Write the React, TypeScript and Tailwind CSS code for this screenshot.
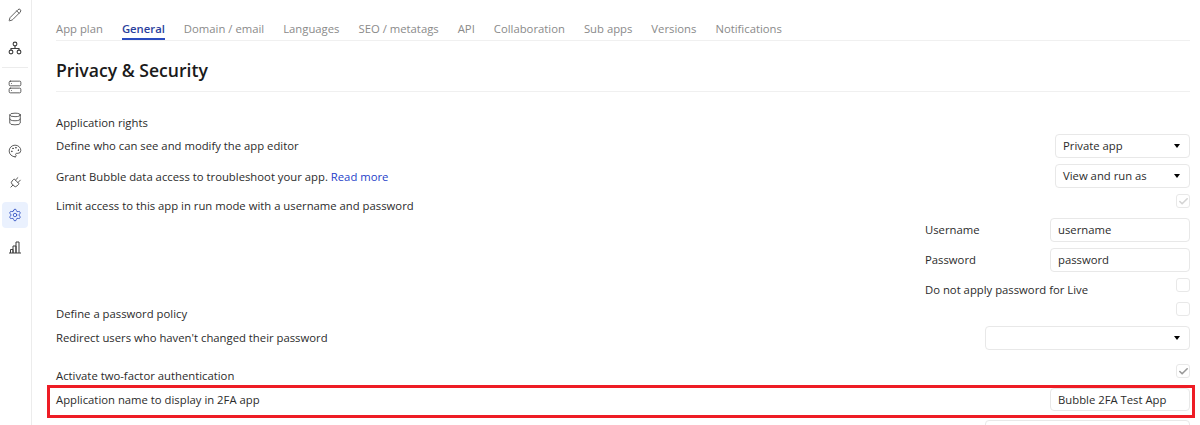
import React from "react";
import { Pencil, Server, Database, Palette, Plug, Settings, Check } from "lucide-react";

const tabs = ["App plan", "General", "Domain / email", "Languages", "SEO / metatags", "API", "Collaboration", "Sub apps", "Versions", "Notifications"];

function Caret() {
  return <span className="w-0 h-0 border-x-[3.5px] border-x-transparent border-t-[4px] border-t-black" />;
}

function Select({ value, w }: { value?: string; w: string }) {
  return (
    <div className={`${w} h-full flex items-center justify-between pl-[7px] pr-[9px] border border-[#e8e8e8] rounded bg-white text-[11.3px] text-[#2b2b2b]`}>
      <span className="mt-[1px]">{value}</span>
      <Caret />
    </div>
  );
}

function Input({ value, w }: { value?: string; w: string }) {
  return (
    <div className={`${w} h-full flex items-center pl-[7px] pt-[1px] border border-[#e8e8e8] rounded bg-white text-[11.3px] text-[#2b2b2b]`}>{value}</div>
  );
}

function Box({ checked, faint }: { checked?: boolean; faint?: boolean }) {
  return (
    <div className="w-[14px] h-[14px] flex items-center justify-center border border-[#e8e8e8] rounded-[3px] bg-white">
      {checked && <Check size={11} strokeWidth={3.5} className={faint ? "text-[#d4d4d4]" : "text-[#999]"} />}
    </div>
  );
}

function SideIcon({ children, active }: { children: React.ReactNode; active?: boolean }) {
  return (
    <div className={`w-[26px] h-[26px] flex items-center justify-center rounded ${active ? "bg-[#eaf1fe] text-[#2a4bc0]" : "text-[#3d3d3d]"}`}>
      {children}
    </div>
  );
}

function Tree() {
  return (
    <svg width="14" height="14" viewBox="0 0 14 14" fill="none" stroke="currentColor" strokeWidth="1.1">
      <circle cx="7" cy="3" r="1.9" />
      <circle cx="3" cy="11" r="1.9" />
      <circle cx="11" cy="11" r="1.9" />
      <path d="M7 5v2.5M3 9V7.5h8V9" />
    </svg>
  );
}

function Bars() {
  return (
    <svg width="14" height="14" viewBox="0 0 14 14" fill="none" stroke="currentColor" strokeWidth="1">
      <path d="M1 13h12" />
      <path d="M2.5 13V9.5h2.5V13M5 13V6h3v7M8 13V2h3v11" />
    </svg>
  );
}

export default function App() {
  const s = { size: 14, strokeWidth: 1.4 };
  return (
    <div className="relative w-[1200px] h-[425px] overflow-hidden bg-white flex text-[#333] font-['Open_Sans',sans-serif]">
      <aside className="w-[32px] shrink-0 border-r border-[#ececec] flex flex-col pl-[2px] pt-[2px]">
        <SideIcon><Pencil {...s} /></SideIcon>
        <div className="mt-[7px]"><SideIcon><Tree /></SideIcon></div>
        <div className="w-[26px] border-t border-[#ececec] mt-[6px]" />
        <div className="flex flex-col gap-[6px] mt-[6px]">
          <SideIcon><Server {...s} /></SideIcon>
          <SideIcon><Database {...s} /></SideIcon>
          <SideIcon><Palette {...s} /></SideIcon>
          <SideIcon><Plug {...s} className="rotate-45" /></SideIcon>
          <SideIcon active><Settings {...s} /></SideIcon>
          <SideIcon><Bars /></SideIcon>
        </div>
      </aside>
      <main className="flex-1 pl-[24px] pr-[10px]">
        <nav className="h-[41px] border-b border-[#f0f0f0] flex items-end gap-[19px] text-[11.3px]">
          {tabs.map((t) => (
            <div key={t} className={`h-[23px] leading-[23px] whitespace-nowrap ${t === "General" ? "font-semibold text-[#2a3f9d] border-b-2 border-[#2a4bc0]" : "text-[#8a8a8a]"}`}>{t}</div>
          ))}
        </nav>
        <h1 className="h-[51px] leading-[58px] text-[17.6px] font-semibold text-[#1a1a1a] border-b border-[#f0f0f0]">Privacy &amp; Security</h1>
        <div className="text-[11.3px] text-[#2b2b2b] flex flex-col">
          <div className="h-[16px] mt-[23px] flex items-center pt-[1px]">Application rights</div>
          <div className="h-[24px] mt-[3px] flex items-center justify-between"><span className="mt-[1px]">Define who can see and modify the app editor</span><Select value="Private app" w="w-[135px]" /></div>
          <div className="h-[24px] mt-[6px] flex items-center justify-between"><span className="mt-[2px]">Grant Bubble data access to troubleshoot your app. <span className="text-[#1f3fc9]">Read more</span></span><Select value="View and run as" w="w-[135px]" /></div>
          <div className="h-[14px] mt-[6px] flex items-center justify-between"><span className="mt-[11px]">Limit access to this app in run mode with a username and password</span><Box checked faint /></div>
          <div className="h-[24px] mt-[10px] flex items-center justify-end"><span className="w-[125px] mt-[1px]">Username</span><Input value="username" w="w-[140px]" /></div>
          <div className="h-[24px] mt-[6px] flex items-center justify-end"><span className="w-[125px] mt-[1px]">Password</span><Input value="password" w="w-[140px]" /></div>
          <div className="h-[14px] mt-[6px] flex items-center justify-end"><span className="w-[251px] mt-[11px]">Do not apply password for Live</span><Box /></div>
          <div className="h-[14px] mt-[10px] flex items-center justify-between"><span className="mt-[10px]">Define a password policy</span><Box /></div>
          <div className="h-[24px] mt-[10px] flex items-center justify-between"><span>Redirect users who haven't changed their password</span><Select w="w-[205px]" /></div>
          <div className="h-[14px] mt-[14px] flex items-center justify-between"><span className="mt-[11px]">Activate two-factor authentication</span><Box checked /></div>
          <div className="h-[23px] mt-[10px] flex items-center justify-between"><span className="mt-[1px]">Application name to display in 2FA app</span><Input value="Bubble 2FA Test App" w="w-[140px]" /></div>
          <div className="h-[23px] mt-[9px] flex items-center justify-end"><Input w="w-[205px]" /></div>
        </div>
      </main>
      <div className="absolute left-[47px] top-[385px] w-[1148px] h-[33px] border-[3px] border-[#ee1c25]" />
    </div>
  );
}
